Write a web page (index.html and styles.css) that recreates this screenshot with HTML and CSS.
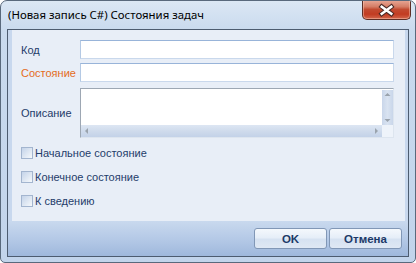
FILE: index.html
```html
<!DOCTYPE html>
<html lang="ru">
<head>
<meta charset="utf-8">
<title>Состояния задач</title>
<link rel="stylesheet" href="styles.css">
</head>
<body>
<div class="window">
  <div class="titlebar">
    <span class="title">(Новая запись C#) Состояния задач</span>
    <button class="close" type="button" aria-label="Закрыть">
      <svg width="49" height="20" viewBox="0 0 49 20">
        <path d="M19.5 6.5 L29.5 14 M29.5 6.5 L19.5 14" stroke="#4a2a26" stroke-width="4.8" stroke-linecap="square" fill="none"/>
        <path d="M19.5 6.5 L29.5 14 M29.5 6.5 L19.5 14" stroke="#ffffff" stroke-width="2.6" stroke-linecap="square" fill="none"/>
      </svg>
    </button>
  </div>
  <div class="client">
    <div class="panel">
      <div class="row">
        <span class="lbl">Код</span>
        <div class="input"></div>
      </div>
      <div class="row">
        <span class="lbl req">Состояние</span>
        <div class="input"></div>
      </div>
      <div class="row memo-row">
        <span class="lbl">Описание</span>
        <div class="memo">
          <div class="memo-text"></div>
          <div class="vscroll">
            <svg width="11" height="35" viewBox="0 0 11 35">
              <path d="M2.5 6 L8.5 6 L5.5 3 Z" fill="#9aa3ad"/>
              <path d="M2.5 29 L8.5 29 L5.5 32 Z" fill="#9aa3ad"/>
            </svg>
          </div>
          <div class="hscroll">
            <svg width="301" height="12" viewBox="0 0 301 12">
              <path d="M7 3 L7 9 L4 6 Z" fill="#9aa3ad"/>
              <path d="M294 3 L294 9 L297 6 Z" fill="#9aa3ad"/>
            </svg>
          </div>
          <div class="corner"></div>
        </div>
      </div>
      <div class="checks">
        <label class="check"><span class="box"></span>Начальное состояние</label>
        <label class="check"><span class="box"></span>Конечное состояние</label>
        <label class="check"><span class="box"></span>К сведению</label>
      </div>
    </div>
    <div class="buttons">
      <button class="btn" type="button">OK</button>
      <button class="btn" type="button">Отмена</button>
    </div>
  </div>
</div>
</body>
</html>
```

FILE: styles.css
```css
html, body {
  margin: 0;
  padding: 0;
  background: #ffffff;
}

.window {
  box-sizing: border-box;
  width: 416px;
  height: 263px;
  border: 1px solid #59697c;
  border-radius: 7px 7px 5px 5px;
  background: linear-gradient(180deg, #dbe7f4 0px, #c9daee 30px, #c2d4eb 100%);
  display: flex;
  flex-direction: column;
  overflow: hidden;
}

.titlebar {
  height: 28px;
  display: flex;
  align-items: flex-start;
  flex: none;
}

.title {
  padding-left: 7px;
  line-height: 28px;
  font-family: "Noto Sans", sans-serif;
  font-size: 11.4px;
  color: #000000;
  white-space: nowrap;
}

.close {
  margin-left: auto;
  margin-right: 4px;
  margin-top: -1px;
  width: 49px;
  height: 20px;
  padding: 0;
  border: 1px solid #5c2f27;
  border-top: none;
  border-radius: 0 0 5px 5px;
  background: linear-gradient(180deg, #e9aa98 0%, #d57d66 35%, #c24a30 50%, #c23c22 75%, #d2664c 100%);
  box-shadow: inset 0 0 0 1px rgba(255, 210, 190, 0.45);
  display: flex;
  align-items: center;
  justify-content: center;
}

.close svg {
  display: block;
}

.client {
  margin: 0 6px;
  height: 228px;
  box-sizing: border-box;
  border: 1px solid #4d5c70;
  background: #c8d8ee;
  display: flex;
  flex-direction: column;
  flex: none;
}

.panel {
  margin: 0 3px 0 4px;
  height: 191px;
  box-sizing: border-box;
  background: #e8eef7;
  padding: 10px 11px 0 9px;
  display: flex;
  flex-direction: column;
}

.row {
  display: flex;
  align-items: center;
  height: 19px;
  margin-bottom: 4px;
}

.lbl {
  width: 59px;
  flex: none;
  font-family: "Liberation Sans", Arial, sans-serif;
  font-size: 11px;
  color: #1f3c6a;
  white-space: nowrap;
}

.lbl.req {
  color: #e46c1c;
}

.input {
  flex: 1;
  height: 19px;
  box-sizing: border-box;
  background: #ffffff;
  border: 1px solid #c9d8ec;
  border-top-color: #98b4d9;
  border-left-color: #b4c9e4;
}

.memo-row {
  height: 50px;
  margin-top: 2px;
  margin-bottom: 0;
}

.memo {
  flex: 1;
  height: 50px;
  box-sizing: border-box;
  border: 1px solid #dde5ef;
  border-top-color: #9da7b3;
  border-left-color: #9da7b3;
  background: #ffffff;
  display: grid;
  grid-template-columns: 1fr 11px;
  grid-template-rows: 1fr 12px;
}

.memo-text {
  background: #ffffff;
}

.vscroll {
  background: linear-gradient(90deg, #c9d6ea 0%, #d9e3f1 50%, #c9d6ea 100%);
  margin-top: 1px;
}

.vscroll svg,
.hscroll svg {
  display: block;
}

.hscroll {
  background: linear-gradient(180deg, #dde6f3 0%, #cfdbec 50%, #c3d2e8 100%);
}

.corner {
  background: #eef3fa;
}

.checks {
  margin-top: 6px;
  display: flex;
  flex-direction: column;
  gap: 6px;
}

.check {
  height: 18px;
  display: flex;
  align-items: center;
  font-family: "Liberation Sans", Arial, sans-serif;
  font-size: 11px;
  color: #1f3c6a;
  white-space: nowrap;
}

.box {
  width: 12px;
  height: 12px;
  box-sizing: border-box;
  border: 1px solid #a3b5cf;
  background: linear-gradient(135deg, #c4d3e9 0%, #dde6f2 50%, #f6f9fc 100%);
  margin-right: 2px;
  flex: none;
}

.buttons {
  flex: 1;
  background: linear-gradient(180deg, #c9d9ee 0%, #b3c8e6 55%, #9fb8dc 100%);
  display: flex;
  justify-content: flex-end;
  align-items: flex-start;
  gap: 2px;
  padding: 7px 6px 0 0;
}

.btn {
  width: 73px;
  height: 21px;
  padding: 0;
  box-sizing: border-box;
  border: 1px solid #8197b6;
  border-radius: 3px;
  background: linear-gradient(180deg, #f4f8fc 0%, #e6eef8 45%, #d6e2f1 55%, #dfe8f4 100%);
  font-family: "Liberation Sans", Arial, sans-serif;
  font-size: 11.5px;
  font-weight: bold;
  color: #1c3a68;
}
```
